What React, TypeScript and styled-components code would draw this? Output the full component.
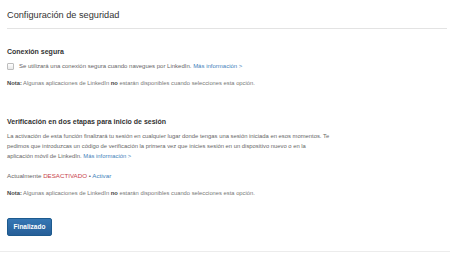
import React from 'react';
import styled, { createGlobalStyle } from 'styled-components';

const GlobalStyle = createGlobalStyle`
  html, body {
    margin: 0;
    padding: 0;
    background: #fff;
  }
  body {
    font-family: "Liberation Sans", Arial, sans-serif;
    color: #666;
  }
`;

const App: React.FC = () => (
  <>
    <GlobalStyle />
    <StyledPage>
      <StyledHeader>
        <StyledTitle>Configuración de seguridad</StyledTitle>
      </StyledHeader>

      <StyledSection top={18}>
        <StyledHeading>Conexión segura</StyledHeading>
        <StyledCheckRow>
          <StyledCheckbox />
          <span>
            Se utilizará una conexión segura cuando navegues por LinkedIn.{' '}
            <StyledLink href="#">Más información &gt;</StyledLink>
          </span>
        </StyledCheckRow>
        <StyledNote top={8}>
          <b>Nota:</b> Algunas aplicaciones de LinkedIn <b>no</b> estarán disponibles cuando selecciones esta opción.
        </StyledNote>
      </StyledSection>

      <StyledSection top={30}>
        <StyledHeading>Verificación en dos etapas para inicio de sesión</StyledHeading>
        <StyledParagraph>
          La activación de esta función finalizará tu sesión en cualquier lugar donde tengas una sesión iniciada en esos momentos. Te
          <br />
          pedimos que introduzcas un código de verificación la primera vez que inicies sesión en un dispositivo nuevo o en la
          <br />
          aplicación móvil de LinkedIn. <StyledLink href="#">Más información &gt;</StyledLink>
        </StyledParagraph>
        <StyledStatus>
          Actualmente <StyledOff>DESACTIVADO</StyledOff> • <StyledLink href="#">Activar</StyledLink>
        </StyledStatus>
        <StyledNote top={9.5}>
          <b>Nota:</b> Algunas aplicaciones de LinkedIn <b>no</b> estarán disponibles cuando selecciones esta opción.
        </StyledNote>
      </StyledSection>

      <StyledFooter>
        <StyledButton type="button">Finalizado</StyledButton>
      </StyledFooter>
    </StyledPage>
  </>
);
export default App;

const StyledPage = styled.div`
  width: 450px;
  height: 252px;
  box-sizing: border-box;
  padding: 0 3px 0 7px;
  border-bottom: 1px solid #ececec;
`;

const StyledHeader = styled.div`
  padding: 10px 0 7px;
  border-bottom: 1px solid #e3e3e3;
`;

const StyledTitle = styled.h1`
  margin: 0;
  font-size: 9.2px;
  line-height: 11px;
  font-weight: normal;
  color: #333;
`;

const StyledSection = styled.div<{ top: number }>`
  margin-top: ${p => p.top}px;
`;

const StyledHeading = styled.h2`
  margin: 0;
  font-size: 7px;
  line-height: 9px;
  font-weight: bold;
  color: #333;
`;

const StyledCheckRow = styled.label`
  display: flex;
  align-items: center;
  gap: 5px;
  margin-top: 6px;
  font-size: 6px;
  line-height: 9px;
  color: #666;
`;

const StyledCheckbox = styled.span`
  width: 5px;
  height: 5px;
  border: 1px solid #bdbdbd;
  border-radius: 1px;
  background: linear-gradient(#fff, #e8e8e8);
  flex-shrink: 0;
`;

const StyledLink = styled.a`
  color: #3f7fba;
  text-decoration: none;
`;

const StyledNote = styled.p<{ top: number }>`
  margin: ${p => p.top}px 0 0;
  font-size: 5.8px;
  line-height: 8px;
  color: #777;

  b {
    color: #444;
  }
`;

const StyledParagraph = styled.p`
  margin: 5px 0 0;
  font-size: 5.85px;
  line-height: 10px;
  white-space: nowrap;
  color: #666;
`;

const StyledStatus = styled.p`
  margin: 9.5px 0 0;
  font-size: 6.2px;
  line-height: 9px;
  color: #666;
`;

const StyledOff = styled.span`
  color: #c8434b;
`;

const StyledFooter = styled.div`
  margin-top: 18px;
`;

const StyledButton = styled.button`
  width: 45px;
  height: 18px;
  padding: 0;
  border: 1px solid #1d5a8e;
  border-radius: 2px;
  background: linear-gradient(#3677b4, #265f98);
  color: #fff;
  font-family: "Liberation Sans", Arial, sans-serif;
  font-size: 6.5px;
  font-weight: bold;
`;
